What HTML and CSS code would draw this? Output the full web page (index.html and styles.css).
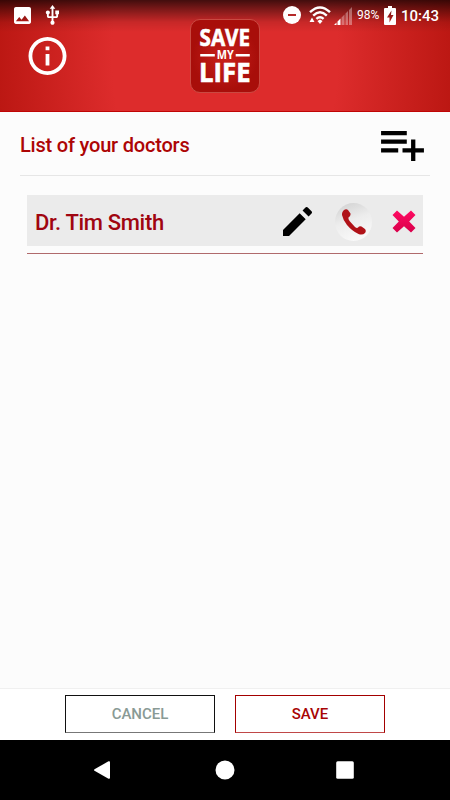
FILE: index.html
```html
<!DOCTYPE html>
<html lang="en">
<head>
  <meta charset="UTF-8" />
  <meta name="viewport" content="width=device-width, initial-scale=1.0"/>
  <title>Save My Life</title>
  <link rel="stylesheet" href="styles.css">
</head>
<body>
  <div class="screen">
    <header>
      <div class="status-bar">
        <svg class="image-icon" viewBox="3 3 18 18"><path d="M21 19V5c0-1.100-.9-2-2-2H5c-1.100 0-2 .9-2 2v14c0 1.100.9 2 2 2h14c1.100 0 2-.9 2-2zM8.500 13.500l2.500 3.010L14.500 12l4.500 6H5l3.500-4.500z"/></svg>
        <svg class="usb-icon" viewBox="4 1 16 21.500"><path d="M15 7v4h1v2h-3V5h2l-3-4-3 4h2v8H8v-2.070c.7-.37 1.200-1.080 1.200-1.930 0-1.210-.99-2.200-2.200-2.200S4.800 7.790 4.800 9c0 .85.5 1.560 1.200 1.930V13c0 1.110.89 2 2 2h3v3.050c-.71.37-1.200 1.100-1.200 1.950 0 1.220.99 2.200 2.200 2.200s2.200-.98 2.200-2.200c0-.85-.49-1.580-1.200-1.950V15h3c1.110 0 2-.89 2-2v-2h1V7h-4z"/></svg>
        <div class="status-right">
          <svg class="dnd-icon" viewBox="0 0 18 18"><circle cx="9" cy="9" r="9"/><path class="dnd-line" d="M5 8h8v2H5z"/></svg>
          <svg class="wifi-icon" viewBox="0 0 22 18">
            <path class="wifi-arc" d="M1 6.200Q11-3.400 21 6.200M4.200 9.600Q11 3 17.800 9.600M7.400 12.900Q11 9.600 14.600 12.900"/>
            <path d="M11 13.600l2.600 1.300L11 18l-2.600-3.100zM3 11.500L5.500 16H.5z"/>
          </svg>
          <svg class="signal-icon" viewBox="0 0 18 18"><path class="signal-dim" d="M7.500 10.500l3-3V18h-3zM11.500 6.500l2.500-2.500v14h-2.500zM15 3l3-3v18h-3z"/><path d="M0 18l2.500-2.500V18zM3.500 14.500l3-3V18h-3z"/></svg>
          <span class="battery-text">98%</span>
          <svg class="battery-icon" viewBox="0 0 12 19"><path fill-rule="evenodd" d="M4 0h4v2h3q1 0 1 1v15q0 1-1 1H1q-1 0-1-1V3q0-1 1-1h3zM7.500 4.500L3 11.500h2.500v5L9.500 9H7z"/></svg>
          <span class="clock">10:43</span>
        </div>
      </div>
      <div class="brand">
        <svg class="info-icon" viewBox="2 2 20 20"><path d="M11 17h2v-6h-2v6zm1-15C6.480 2 2 6.480 2 12s4.480 10 10 10 10-4.480 10-10S17.520 2 12 2zm0 18c-4.410 0-8-3.590-8-8s3.590-8 8-8 8 3.590 8 8-3.590 8-8 8zM11 9h2V7h-2v2z"/></svg>
        <svg class="logo" viewBox="0 0 70 73">
          <text class="logo-word" x="8.800" y="26.300" font-size="23" textLength="52" lengthAdjust="spacingAndGlyphs">SAVE</text>
          <path d="M9.500 34.500h15v2.500h-15zM46 34.500h14.500v2.500H46z"/>
          <text x="26.500" y="40" font-size="12" textLength="17.500" lengthAdjust="spacingAndGlyphs">MY</text>
          <text class="logo-word" x="8.300" y="63.500" font-size="27" textLength="53" lengthAdjust="spacingAndGlyphs">LIFE</text>
        </svg>
      </div>
    </header>

    <main>
      <div class="list-header">
        <h2>List of your doctors</h2>
        <svg class="add-icon" viewBox="2 6 20 14"><path d="M14 10H2v2h12v-2zm0-4H2v2h12V6zm4 8v-4h-2v4h-4v2h4v4h2v-4h4v-2h-4zM2 16h8v-2H2v2z"/></svg>
      </div>
      <div class="doctor">
        <div class="doctor-row">
          <span class="doctor-name">Dr. Tim Smith</span>
          <svg class="edit-icon" viewBox="3 3 18 18"><path d="M3 17.250V21h3.750L17.100 10.650l-3.750-3.750L3 17.250zM20.710 7.040c.39-.39.39-1.020 0-1.410l-2.340-2.340c-.39-.39-1.020-.39-1.410 0l-1.830 1.830 3.750 3.750 1.830-1.830z"/></svg>
          <div class="call">
            <svg class="phone-icon" viewBox="0 0 24 26"><path d="M1.500 1.500Q4-.5 6 1L8.500 4.500Q9 7 6.500 8.500Q6 10 8 12.500L13 18Q15 19.500 16 18.500Q17.500 16.500 19.500 17.500L23 20Q24.500 22 23 24Q20.500 26.500 16.500 25Q10 22 5 16Q1 11 0 6Q-.2 3 1.500 1.500z"/></svg>
          </div>
          <svg class="delete-icon" viewBox="0 0 24 23">
            <defs><linearGradient id="pink" x1="0" y1="0" x2="0" y2="1"><stop offset="0" stop-color="#ff0a62"/><stop offset="1" stop-color="#d8004a"/></linearGradient></defs>
            <path fill="url(#pink)" d="M5 .5L12 6.800 19 .5 23.500 5 17.200 11.500 23.500 18 19 22.500 12 16.200 5 22.500.5 18 6.800 11.500.5 5z"/>
          </svg>
        </div>
      </div>
    </main>

    <div class="actions">
      <button class="btn cancel">CANCEL</button>
      <button class="btn save">SAVE</button>
    </div>

    <footer>
      <svg class="back-icon" viewBox="0 0 20 20"><path d="M2.500 9.200L16.500 1.300q1.500-.5 1.500 1v15.400q0 1.500-1.500 1L2.500 10.800q-1-.8 0-1.600z"/></svg>
      <svg viewBox="0 0 20 20"><circle cx="10" cy="10" r="9.500"/></svg>
      <svg viewBox="0 0 20 20"><rect x="1.200" y="1.200" width="17.600" height="17.600" rx="1.500"/></svg>
    </footer>
  </div>
</body>
</html>
```

FILE: styles.css
```css
* { box-sizing: border-box; }
body, html {
  margin: 0;
  padding: 0;
  font-family: Roboto, sans-serif;
  background: #fcfcfc;
  height: 100%;
}

svg {
  display: block;
  flex: none;
}

.screen {
  display: flex;
  flex-direction: column;
  height: 800px;
  width: 450px;
}

header {
  height: 112px;
  border-bottom: 1px solid #c00505;
  fill: #fff;
  color: #fff;
  background:
    linear-gradient(rgba(0, 0, 0, 0.7), rgba(0, 0, 0, 0.42) 10px, rgba(0, 0, 0, 0.1) 22px, transparent 32px),
    radial-gradient(ellipse 235px 380px at 225px 56px, #dd2c2c 48%, #b91611 100%);
}

.status-bar {
  display: flex;
  align-items: center;
  height: 30px;
  padding: 0 11px 0 14px;
}

.image-icon {
  width: 17px;
  height: 17px;
}

.usb-icon {
  width: 15px;
  height: 20px;
  margin-left: 14px;
}

.status-right {
  display: flex;
  align-items: center;
  margin-left: auto;
}

.dnd-icon {
  width: 18px;
  height: 18px;
}

.dnd-line {
  fill: #b52a2a;
}

.wifi-icon {
  width: 22px;
  height: 18px;
  margin-left: 8px;
}

.wifi-arc {
  fill: none;
  stroke: #fff;
  stroke-width: 2.4;
}

.signal-icon {
  width: 18px;
  height: 18px;
  margin: 2px 0 0 3px;
}

.signal-dim {
  fill: rgba(255, 255, 255, 0.35);
}

.battery-text {
  width: 23px;
  margin-left: 5px;
  font-size: 12px;
}

.battery-icon {
  width: 12px;
  height: 19px;
  margin-left: 4px;
}

.clock {
  width: 38px;
  margin: 2px 0 0 5px;
  font-size: 15px;
  font-weight: 500;
  white-space: nowrap;
}

.brand {
  display: flex;
  margin-top: -11px;
  padding-left: 28px;
}

.info-icon {
  width: 39px;
  height: 38px;
  margin-top: 18px;
}

.logo {
  width: 70px;
  height: 74px;
  margin-left: 123px;
  border: 1px solid #c94a42;
  border-radius: 10px;
  background: radial-gradient(circle at 50% 52%, #c9201c, #a80e0a 65%);
  font-family: "Open Sans", sans-serif;
  font-weight: 700;
}

.logo-word {
  stroke: #fff;
  stroke-width: 0.6;
}

main {
  flex-grow: 1;
  padding: 0 20px;
}

.list-header {
  display: flex;
  align-items: center;
  justify-content: space-between;
  height: 64px;
  padding-right: 6px;
  border-bottom: 1px solid #e6e6e6;
}

h2 {
  margin: 0;
  padding-top: 2px;
  font-size: 20px;
  font-weight: 500;
  letter-spacing: -0.2px;
  color: #ad0505;
}

.add-icon {
  width: 43px;
  height: 30px;
  margin-top: 4px;
}

.doctor {
  margin: 19px 7px 0 7px;
  padding-bottom: 7px;
  border-bottom: 1px solid #b06a6c;
}

.doctor-row {
  display: flex;
  align-items: center;
  height: 51px;
  padding: 0 7px 0 8px;
  background: #ebebeb;
}

.doctor-name {
  margin-right: auto;
  padding-top: 3px;
  font-size: 22px;
  font-weight: 500;
  letter-spacing: -0.32px;
  color: #a00510;
}

.edit-icon {
  width: 29px;
  height: 29px;
  margin-top: 1px;
}

.call {
  display: flex;
  align-items: center;
  justify-content: center;
  width: 37px;
  height: 38px;
  margin: 2px 0 0 23px;
  border-radius: 50%;
  background: linear-gradient(160deg, #cfcfcf, #ededed 45%, #fcfcfc);
}

.phone-icon {
  width: 24px;
  height: 26px;
  fill: #b01218;
}

.delete-icon {
  width: 24px;
  height: 23px;
  margin: 2px 0 0 20px;
}

.actions {
  display: flex;
  justify-content: center;
  gap: 20px;
  height: 52px;
  padding-top: 6px;
  border-top: 1px solid #f0f0f0;
  background: #fff;
}

.btn {
  width: 150px;
  height: 38px;
  padding: 0;
  border: 1px solid #111;
  background: #fff;
  font-family: inherit;
  font-size: 15px;
  font-weight: 500;
}

.cancel {
  border-bottom-color: #777;
  color: #899a95;
}

.save {
  border-color: #a30000;
  border-bottom-color: #c04848;
  color: #a80505;
}

footer {
  display: flex;
  align-items: center;
  justify-content: center;
  gap: 100px;
  height: 60px;
  background: #000;
  fill: #fff;
}

footer svg {
  width: 20px;
  height: 20px;
}

.back-icon {
  margin: 0 3px 0 -3px;
}
```
